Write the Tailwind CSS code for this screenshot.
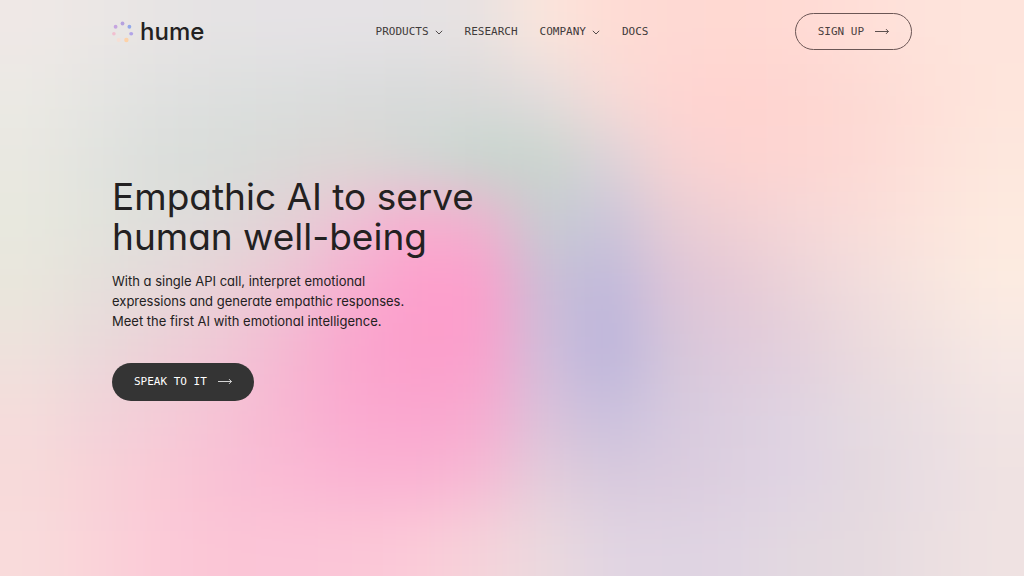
<!DOCTYPE html>
<html lang="en">
<head>
  <meta charset="UTF-8" />
  <meta name="viewport" content="width=device-width, initial-scale=1" />
  <title>Hume AI</title>
  <script src="https://cdn.jsdelivr.net/npm/@tailwindcss/browser@4"></script>
</head>
<body class="relative isolate min-h-screen overflow-x-hidden bg-[#f3e3e0] font-['Inter',sans-serif] [font-feature-settings:'cv11'] text-[#232121]">

  <!-- Background gradient, filled in by the script below -->
  <svg class="absolute inset-0 -z-10 h-full w-full" viewBox="0 0 16 9" preserveAspectRatio="none" aria-hidden="true">
    <defs>
      <filter id="soften" filterUnits="userSpaceOnUse" x="-2" y="-2" width="20" height="13" color-interpolation-filters="sRGB">
        <feGaussianBlur stdDeviation="0.45" />
      </filter>
    </defs>
    <g id="mesh" filter="url(#soften)" shape-rendering="crispEdges"></g>
  </svg>

  <div class="mx-auto w-full px-6 md:px-28">
    <header class="grid grid-cols-[1fr_auto_1fr] items-center pt-[13px]">
      <a href="#" class="flex items-center gap-[6px] justify-self-start" aria-label="hume">
        <svg class="h-[22px] w-[22px]" viewBox="0 0 22 22" aria-hidden="true">
          <ellipse cx="10.5" cy="2.5" rx="1.9" ry="2" fill="#b5a2df" />
          <ellipse cx="17.4" cy="5.7" rx="1.9" ry="2" fill="#92a8ea" />
          <ellipse cx="19.2" cy="12.7" rx="2" ry="1.7" fill="#b2a4e8" />
          <ellipse cx="14.4" cy="19" rx="2.2" ry="2.2" fill="#fdd2a8" />
          <ellipse cx="6.6" cy="19" rx="2" ry="2" fill="#f5dfd6" />
          <ellipse cx="1.9" cy="12.7" rx="1.8" ry="1.8" fill="#f1bfd0" />
          <ellipse cx="3.6" cy="5.7" rx="1.9" ry="2" fill="#c6a5e0" />
        </svg>
        <span class="text-[24px] leading-7 font-medium">hume</span>
      </a>

      <nav class="flex items-center gap-[22px] font-['DejaVu_Sans_Mono',monospace] text-[11px] leading-4 text-[#3f3a3a]">
        <button type="button" class="flex items-center gap-[6px]">
          PRODUCTS
          <svg class="h-2 w-2" viewBox="0 0 8 8" fill="none" stroke="currentColor" stroke-width=".9" aria-hidden="true"><path d="M.8 2.8L4 6L7.2 2.8" /></svg>
        </button>
        <a href="#">RESEARCH</a>
        <button type="button" class="flex items-center gap-[6px]">
          COMPANY
          <svg class="h-2 w-2" viewBox="0 0 8 8" fill="none" stroke="currentColor" stroke-width=".9" aria-hidden="true"><path d="M.8 2.8L4 6L7.2 2.8" /></svg>
        </button>
        <a href="#">DOCS</a>
      </nav>

      <a href="#" class="flex h-[37px] items-center gap-[11px] justify-self-end rounded-full border border-[#6b5655] px-[22px] font-['DejaVu_Sans_Mono',monospace] text-[11px] leading-4 text-[#4b3f3e]">
        SIGN UP
        <svg class="h-2 w-[14px]" viewBox="0 0 14 8" fill="none" stroke="currentColor" stroke-width=".9" aria-hidden="true"><path d="M0 3.5H13.4M11 1.1L13.4 3.5L11 5.9" /></svg>
      </a>
    </header>

    <main class="pt-[127px] pb-10">
      <h1 class="text-[37px] leading-10">Empathic AI to serve<br />human well-being</h1>
      <p class="mt-[14px] text-[13px] leading-5">
        With a single API call, interpret emotional<br />
        expressions and generate empathic responses.<br />
        Meet the first AI with emotional intelligence.
      </p>
      <a href="#" class="mt-8 inline-flex h-[38px] items-center gap-[11px] rounded-full bg-[#343434] px-[22px] font-['DejaVu_Sans_Mono',monospace] text-[11px] leading-4 text-white">
        SPEAK TO IT
        <svg class="h-2 w-[14px]" viewBox="0 0 14 8" fill="none" stroke="currentColor" stroke-width=".8" aria-hidden="true"><path d="M0 3.5H13.4M11 1.1L13.4 3.5L11 5.9" /></svg>
      </a>
    </main>
  </div>

  <script>
    // Colour mesh, one row of swatches per line, left to right
    const rows = [
      "efe8e6 ebe7e5 e7e4e4 e5e3e4 e5e2e5 e5e2e5 e5e2e4 e8e2e1 fbe5dc fedcd5 fed9d3 ffd9d2 ffdad4 ffdfd8 fee3db fee4dc",
      "ebe9e4 e5e5e2 e0e1e0 dddfde dbdedd d9dbdb d8dada dad9d9 e2dcdd f6dbd7 ffd5d2 ffd3d0 fed6d1 fddad4 fee0d8 fee5dc",
      "e9e8e1 e1e3df dbdedb d8dcd9 d9d9d7 dbd6d4 d2d8d4 c6d6ce c9d5cd dbd3d9 f6d3d3 fdd3d1 fdd6d2 fddad5 fde1da fde7dd",
      "e8e8de e2e3dc dededb e0d9d9 e4d0d5 efbfd4 f8adcf f1b1cf c6ccd1 cac4da e6ccd5 f0d0d4 f5d7d8 f9ddd9 fce4dc fdeadf",
      "e9e6dc e5dfdb e6d8d9 ead0d6 efc3d4 f7add0 fd9fcc fd9ecb cbbed6 beb8db dcc4d8 e5c9d6 ebd4d9 f1dddd f7e5df fcebe1",
      "eee1dc ead9da edcfd7 f1c6d6 f5b7d2 faa6cd fb9ecb fba0cc d0bfda bbb4dc d5c6da dfcadb e3d0dc ebdadd f0e1e0 f6e8e4",
      "f5dcdb f1d3d9 f4ccd7 f6c2d5 f8b6d2 faaad0 faa6ce f7abd0 dac2da c9c0dd d6c9de dccfdf e0d4e2 e5dae0 ebdfe2 f1e4e3",
      "f7dada f8d1d8 f9c9d6 f9c0d5 fabad4 fab4d3 fab3d3 f6bbd4 e3cddb d8cadd dacbde ddd0e0 e0d4e3 e4d9df e9dde3 efe2e2",
      "f9dbdb fad3d9 fbcad7 fbc5d6 fbc5d7 fbc6d7 fbcbd8 f5d3da ebd9de e1d5e2 dfd3e2 e0d5e2 e3d9e0 e5dae0 ebdfe1 efe2e2",
    ].map((row) => row.split(" "));

    const mesh = document.getElementById("mesh");
    const clamp = (n, max) => Math.min(Math.max(n, 0), max);

    // Repeat the outer swatches past the edges so the blur stays even there
    for (let y = -2; y < 11; y++) {
      for (let x = -2; x < 18; x++) {
        const cell = document.createElementNS("http://www.w3.org/2000/svg", "rect");
        cell.setAttribute("x", x);
        cell.setAttribute("y", y);
        cell.setAttribute("width", 1);
        cell.setAttribute("height", 1);
        cell.setAttribute("fill", "#" + rows[clamp(y, 8)][clamp(x, 15)]);
        mesh.appendChild(cell);
      }
    }
  </script>
</body>
</html>
